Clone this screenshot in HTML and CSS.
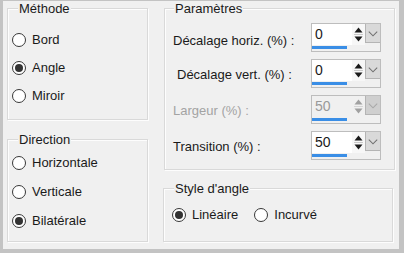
FILE: index.html
```html
<!DOCTYPE html>
<html>
<head>
<meta charset="utf-8">
<link rel="stylesheet" href="styles.css">
</head>
<body>
<div class="dialog">
  <div class="col left">
    <div class="group methode">
      <span class="legend">Méthode</span>
      <div class="radios">
        <label class="radio"><span class="dot"></span>Bord</label>
        <label class="radio on"><span class="dot"></span>Angle</label>
        <label class="radio"><span class="dot"></span>Miroir</label>
      </div>
    </div>
    <div class="group direction">
      <span class="legend">Direction</span>
      <div class="radios">
        <label class="radio"><span class="dot"></span>Horizontale</label>
        <label class="radio"><span class="dot"></span>Verticale</label>
        <label class="radio on"><span class="dot"></span>Bilatérale</label>
      </div>
    </div>
  </div>
  <div class="col right">
    <div class="group params">
      <span class="legend">Paramètres</span>
      <div class="rows">
        <div class="row first">
          <span class="lbl">Décalage horiz. (%) :</span>
          <div class="spin">
            <div class="edit">0</div>
            <div class="arrows"><svg width="13" height="20" viewBox="0 0 13 20"><path d="M2.5 8.5h8L6.5 3.5z" fill="#1a1a1a"/><path d="M2 10.5h9" stroke="#c8c8c8"/><path d="M2.5 12.5h8L6.5 17.5z" fill="#1a1a1a"/></svg></div>
            <div class="drop"><svg width="15" height="19" viewBox="0 0 15 19"><path d="M3 7.5l4.5 4.5 4.5-4.5" fill="none" stroke="#707070" stroke-width="1.1"/></svg></div>
            <div class="track"><span class="bar" style="width:35px"></span></div>
          </div>
        </div>
        <div class="row">
          <span class="lbl indent">Décalage vert. (%) :</span>
          <div class="spin">
            <div class="edit">0</div>
            <div class="arrows"><svg width="13" height="20" viewBox="0 0 13 20"><path d="M2.5 8.5h8L6.5 3.5z" fill="#1a1a1a"/><path d="M2 10.5h9" stroke="#c8c8c8"/><path d="M2.5 12.5h8L6.5 17.5z" fill="#1a1a1a"/></svg></div>
            <div class="drop"><svg width="15" height="19" viewBox="0 0 15 19"><path d="M3 7.5l4.5 4.5 4.5-4.5" fill="none" stroke="#707070" stroke-width="1.1"/></svg></div>
            <div class="track"><span class="bar" style="width:35px"></span></div>
          </div>
        </div>
        <div class="row disabled">
          <span class="lbl">Largeur (%) :</span>
          <div class="spin">
            <div class="edit">50</div>
            <div class="arrows"><svg width="13" height="20" viewBox="0 0 13 20"><path d="M2.5 8.5h8L6.5 3.5z" fill="#a0a0a0"/><path d="M2 10.5h9" stroke="#d4d4d4"/><path d="M2.5 12.5h8L6.5 17.5z" fill="#a0a0a0"/></svg></div>
            <div class="drop"><svg width="15" height="19" viewBox="0 0 15 19"><path d="M3 7.5l4.5 4.5 4.5-4.5" fill="none" stroke="#a8a8a8" stroke-width="1.1"/></svg></div>
            <div class="track"><span class="bar" style="width:35px"></span></div>
          </div>
        </div>
        <div class="row">
          <span class="lbl">Transition (%) :</span>
          <div class="spin">
            <div class="edit">50</div>
            <div class="arrows"><svg width="13" height="20" viewBox="0 0 13 20"><path d="M2.5 8.5h8L6.5 3.5z" fill="#1a1a1a"/><path d="M2 10.5h9" stroke="#c8c8c8"/><path d="M2.5 12.5h8L6.5 17.5z" fill="#1a1a1a"/></svg></div>
            <div class="drop"><svg width="15" height="19" viewBox="0 0 15 19"><path d="M3 7.5l4.5 4.5 4.5-4.5" fill="none" stroke="#707070" stroke-width="1.1"/></svg></div>
            <div class="track"><span class="bar" style="width:35px"></span></div>
          </div>
        </div>
      </div>
    </div>
    <div class="group style">
      <span class="legend">Style d'angle</span>
      <div class="hradios">
        <label class="radio on"><span class="dot"></span>Linéaire</label>
        <label class="radio"><span class="dot"></span>Incurvé</label>
      </div>
    </div>
  </div>
</div>
</body>
</html>
```
FILE: styles.css
```css
* { box-sizing: border-box; }
html, body { margin: 0; padding: 0; }
body {
  background: #c3c3c3;
  width: 404px;
  height: 253px;
  overflow: hidden;
  font-family: "Liberation Sans", Arial, sans-serif;
  font-size: 13px;
  color: #1a1a1a;
}
.dialog {
  margin: 1px 0 0 3px;
  width: 396px;
  height: 248px;
  background: #f0f0f0;
  padding: 7px 4px 0 4px;
  display: grid;
  grid-template-columns: 141px 231px;
  column-gap: 16px;
}
.col { display: flex; flex-direction: column; }
.group {
  border: 1px solid #d9d9d9;
  box-shadow: inset 1px 1px 0 #fdfdfd, 1px 1px 0 #fdfdfd;
}
.legend {
  display: block;
  width: fit-content;
  height: 15px;
  line-height: 15px;
  margin: -8px 0 -7px 10px;
  padding: 0 1px;
  background: #f0f0f0;
}
.methode { height: 112px; }
.direction { height: 103px; margin-top: 19px; }
.params { height: 162px; }
.style { height: 54px; margin-top: 18px; width: 230px; margin-left: -1px; }
.params .legend { margin-left: 9px; }
.style .legend { margin-left: 10px; }

.radios { display: flex; flex-direction: column; padding-left: 4px; }
.methode .radios { padding-top: 24px; gap: 14px; }
.direction .radios { padding-top: 16px; gap: 15px; }
.radio {
  display: flex;
  align-items: center;
  gap: 6px;
  height: 14px;
  line-height: 14px;
  white-space: nowrap;
}
.dot {
  width: 14px;
  height: 14px;
  flex: none;
  border-radius: 50%;
  border: 1px solid #383838;
  background: #fff;
  display: flex;
  align-items: center;
  justify-content: center;
}
.radio.on .dot::after {
  content: "";
  width: 8px;
  height: 8px;
  border-radius: 50%;
  background: #333;
}
.hradios { display: flex; padding: 19px 0 0 8px; gap: 16px; }

.rows { display: flex; flex-direction: column; gap: 7px; padding: 14px 13px 0 8px; }
.row {
  display: grid;
  grid-template-columns: 1fr 70px;
  align-items: center;
  height: 29px;
}
.lbl { padding-top: 2px; white-space: nowrap; }
.row.first .lbl { padding-top: 6px; }
.lbl.indent { padding-left: 4px; }
.spin {
  width: 70px;
  height: 29px;
  border: 1px solid #bdbdbd;
  background: #f0f0f0;
  display: grid;
  grid-template-columns: 40px 13px 15px;
  grid-template-rows: 21px 6px;
}
.edit {
  background: #fff;
  padding: 3px 0 0 3px;
  line-height: 15px;
  font-size: 14px;
}
.arrows { background: #f7f7f7; display: flex; }
.drop {
  background: #d9d9d9;
  border: 1px solid #b4b4b4;
  border-top: 0;
  border-right: 0;
  height: 19px;
  display: flex;
}
.track { grid-column: 1 / -1; background: #f0f0f0; padding-top: 1px; }
.bar { display: block; height: 3px; background: #3a8ee6; }
.disabled .lbl { color: #a3a3a3; }
.disabled .edit { background: #f0f0f0; color: #999; }
.disabled .arrows { background: #f0f0f0; }
.disabled .drop { background: #cfcfcf; }
```
